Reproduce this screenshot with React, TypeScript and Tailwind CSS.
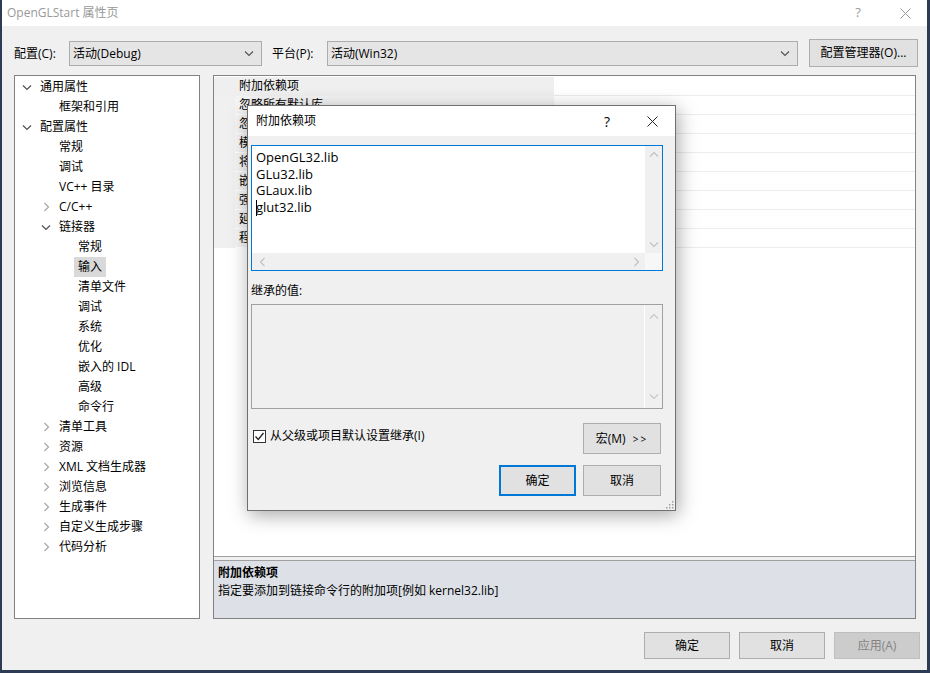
import React from "react";

type TreeItem = { label: string; level: number; chevron?: "open" | "closed"; selected?: boolean };

const treeItems: TreeItem[] = [
  { label: "通用属性", level: 0, chevron: "open" },
  { label: "框架和引用", level: 1 },
  { label: "配置属性", level: 0, chevron: "open" },
  { label: "常规", level: 1 },
  { label: "调试", level: 1 },
  { label: "VC++ 目录", level: 1 },
  { label: "C/C++", level: 1, chevron: "closed" },
  { label: "链接器", level: 1, chevron: "open" },
  { label: "常规", level: 2 },
  { label: "输入", level: 2, selected: true },
  { label: "清单文件", level: 2 },
  { label: "调试", level: 2 },
  { label: "系统", level: 2 },
  { label: "优化", level: 2 },
  { label: "嵌入的 IDL", level: 2 },
  { label: "高级", level: 2 },
  { label: "命令行", level: 2 },
  { label: "清单工具", level: 1, chevron: "closed" },
  { label: "资源", level: 1, chevron: "closed" },
  { label: "XML 文档生成器", level: 1, chevron: "closed" },
  { label: "浏览信息", level: 1, chevron: "closed" },
  { label: "生成事件", level: 1, chevron: "closed" },
  { label: "自定义生成步骤", level: 1, chevron: "closed" },
  { label: "代码分析", level: 1, chevron: "closed" },
];

const levelPad = ["pl-[7px]", "pl-[26px]", "pl-[45px]"];

const propRows = [
  "附加依赖项",
  "忽略所有默认库",
  "忽略特定默认库",
  "模块定义文件",
  "将模块添加到程序集",
  "嵌入托管资源文件",
  "强制符号引用",
  "延迟加载的 DLL",
  "程序集链接资源",
];

function Chevron({ dir, color }: { dir: "up" | "down" | "left" | "right"; color: string }) {
  const d = {
    down: "M1 1.5 L5 5.5 L9 1.5",
    up: "M1 5.5 L5 1.5 L9 5.5",
    right: "M1.5 1 L5.5 5 L1.5 9",
    left: "M5.5 1 L1.5 5 L5.5 9",
  }[dir];
  const vert = dir === "up" || dir === "down";
  return (
    <svg width={vert ? 10 : 7} height={vert ? 7 : 10} viewBox={vert ? "0 0 10 7" : "0 0 7 10"}>
      <path d={d} fill="none" stroke={color} strokeWidth="1.2" />
    </svg>
  );
}

function CloseX({ color }: { color: string }) {
  return (
    <svg width="11" height="11" viewBox="0 0 11 11">
      <path d="M0.5 0.5 L10.5 10.5 M10.5 0.5 L0.5 10.5" stroke={color} strokeWidth="1" />
    </svg>
  );
}

function ComboBox({ value, width }: { value: string; width: string }) {
  return (
    <div className={`${width} h-[25px] border border-[#acacac] bg-[#e5e5e5] flex items-center pl-[3px] pr-[7px]`}>
      <span className="flex-1">{value}</span>
      <Chevron dir="down" color="#555" />
    </div>
  );
}

function WinButton({ label, className = "" }: { label: React.ReactNode; className?: string }) {
  return (
    <div className={`flex items-center justify-center border border-[#adadad] bg-[#e1e1e1] ${className}`}>
      {label}
    </div>
  );
}

export default function App() {
  return (
    <div className="relative w-[930px] h-[673px] overflow-hidden bg-[#2e3b55] text-[12px] text-black font-[family-name:'Open_Sans','Noto_Sans_CJK_SC',sans-serif]">
      {/* main window */}
      <div className="ml-[2px] w-[925px] h-[670px] flex flex-col bg-[#f0f0f0]">
        {/* title bar */}
        <div className="h-[26px] bg-white flex items-center pl-[5px] text-[#999]">
          <span className="flex-1">OpenGLStart 属性页</span>
          <div className="w-[40px] flex justify-center text-[13px]">?</div>
          <div className="w-[43px] ml-[6px] flex justify-center">
            <CloseX color="#999" />
          </div>
        </div>

        {/* toolbar */}
        <div className="h-[49px] flex items-start pt-[15px] pl-[12px]">
          <div className="w-[55px] h-[25px] flex items-center">配置(C):</div>
          <ComboBox value="活动(Debug)" width="w-[193px]" />
          <div className="ml-[10px] w-[55px] h-[25px] flex items-center">平台(P):</div>
          <ComboBox value="活动(Win32)" width="w-[471px]" />
          <WinButton label="配置管理器(O)..." className="ml-[11px] -mt-[2px] w-[109px] h-[28px]" />
        </div>

        {/* content */}
        <div className="h-[544px] flex pl-[12px]">
          {/* tree */}
          <div className="w-[186px] border border-[#828282] bg-white pt-[1px]">
            {treeItems.map((it, i) => (
              <div key={i} className={`h-[20px] flex items-center ${levelPad[it.level]}`}>
                <div className="w-[10px] mr-[8px] flex justify-center items-center">
                  {it.chevron === "open" && <Chevron dir="down" color="#505050" />}
                  {it.chevron === "closed" && <Chevron dir="right" color="#a6a6a6" />}
                </div>
                {it.selected ? (
                  <span className="-ml-[4px] px-[4px] h-[20px] leading-[20px] bg-[#d9d9d9]">{it.label}</span>
                ) : (
                  <span>{it.label}</span>
                )}
              </div>
            ))}
          </div>

          {/* right panel */}
          <div className="ml-[13px] w-[703px] border border-[#828282] flex flex-col">
            <div className="flex-1 bg-white border-b border-[#a0a0a0] pt-[1px]">
              {propRows.map((name, i) => (
                <div key={i} className="h-[19px] flex">
                  <div className={`w-[21px] ${i === 0 ? "bg-[#efefef]" : "bg-[#f0f0f0]"}`} />
                  <div
                    className={`w-[319px] pl-[4px] leading-[18px] overflow-hidden whitespace-nowrap border-b ${
                      i === 0 ? "bg-[#efefef] border-[#efefef]" : "bg-[#f4f4f4] border-white"
                    }`}
                  >
                    {name}
                  </div>
                  <div className="flex-1 border-b border-[#ececec] bg-white" />
                </div>
              ))}
            </div>
            <div className="h-[3px] bg-[#f0f0f0]" />
            <div className="h-[58px] border-t border-[#a0a0a0] bg-[#dde0e7] pl-[4px] pt-[3px] leading-[18px]">
              <div className="font-bold">附加依赖项</div>
              <div>指定要添加到链接命令行的附加项[例如 kernel32.lib]</div>
            </div>
          </div>
        </div>

        {/* bottom buttons */}
        <div className="flex-1 flex justify-end items-start pt-[13px] pr-[7px] gap-[9px]">
          <WinButton label="确定" className="w-[86px] h-[27px]" />
          <WinButton label="取消" className="w-[86px] h-[27px]" />
          <div className="w-[86px] h-[27px] flex items-center justify-center border border-[#bfbfbf] bg-[#cccccc] text-[#838383]">
            应用(A)
          </div>
        </div>
      </div>

      {/* modal dialog */}
      <div className="absolute left-[247px] top-[105px] w-[429px] h-[406px] border border-[#707070] bg-[#f0f0f0] shadow-[2px_4px_18px_rgba(0,0,0,0.35)] flex flex-col">
        <div className="h-[30px] bg-white flex items-center pl-[8px]">
          <span className="flex-1">附加依赖项</span>
          <div className="w-[40px] flex justify-center text-[14px]">?</div>
          <div className="w-[46px] ml-[2px] flex justify-center">
            <CloseX color="#222" />
          </div>
        </div>

        <div className="flex-1 pl-[3px] pr-[11px] pt-[9px] flex flex-col">
          {/* edit box */}
          <div className="w-[412px] h-[126px] border border-[#0078d7] bg-white flex flex-col">
            <div className="flex-1 flex">
              <div className="flex-1 pl-[4px] pt-[3px] leading-[16.7px] text-[13px]">
                <div>OpenGL32.lib</div>
                <div>GLu32.lib</div>
                <div>GLaux.lib</div>
                <div className="relative">
                  <span className="absolute left-[0px] top-[1px] w-[1px] h-[16px] bg-black" />
                  glut32.lib
                </div>
              </div>
              <div className="w-[17px] bg-[#f0f0f0] flex flex-col justify-between items-center py-[5px]">
                <Chevron dir="up" color="#c2c2c2" />
                <Chevron dir="down" color="#c2c2c2" />
              </div>
            </div>
            <div className="h-[17px] flex">
              <div className="flex-1 bg-[#f0f0f0] flex items-center justify-between pl-[7px] pr-[5px]">
                <Chevron dir="left" color="#c2c2c2" />
                <Chevron dir="right" color="#c2c2c2" />
              </div>
              <div className="w-[17px] bg-[#f7f7f7]" />
            </div>
          </div>

          <div className="mt-[12px] leading-[16px]">继承的值:</div>

          <div className="mt-[5px] w-[412px] h-[105px] border border-[#a0a0a0] bg-[#f0f0f0] flex">
            <div className="flex-1" />
            <div className="w-[18px] border-l border-white flex flex-col justify-between items-center py-[8px]">
              <Chevron dir="up" color="#c8c8c8" />
              <Chevron dir="down" color="#c8c8c8" />
            </div>
          </div>

          <div className="mt-[14px] h-[31px] flex items-start">
            <div className="ml-[2px] mt-[4px] flex items-center">
              <div className="w-[13px] h-[13px] border border-[#333] bg-white flex items-center justify-center">
                <svg width="11" height="11" viewBox="0 0 11 11">
                  <path d="M1.5 5.5 L4.3 8.5 L9.5 2" fill="none" stroke="#222" strokeWidth="1.3" />
                </svg>
              </div>
              <span className="ml-[4px]">从父级或项目默认设置继承(I)</span>
            </div>
            <WinButton
              label={
                <span>
                  宏(M) <span className="ml-[4px] text-[10px] tracking-[2px]">&gt;&gt;</span>
                </span>
              }
              className="ml-auto mr-[3px] w-[78px] h-[31px]"
            />
          </div>

          <div className="mt-[11px] flex justify-end gap-[7px] mr-[3px]">
            <div className="w-[77px] h-[31px] flex items-center justify-center border-2 border-[#0078d7] bg-[#e1e1e1]">
              确定
            </div>
            <WinButton label="取消" className="w-[78px] h-[31px]" />
          </div>
        </div>

        <svg className="absolute right-[1px] bottom-[1px]" width="10" height="10" viewBox="0 0 10 10">
          {[
            [8, 2], [8, 5], [8, 8], [5, 5], [5, 8], [2, 8],
          ].map(([x, y], i) => (
            <rect key={i} x={x} y={y} width="1.5" height="1.5" fill="#a0a0a0" />
          ))}
        </svg>
      </div>
    </div>
  );
}
